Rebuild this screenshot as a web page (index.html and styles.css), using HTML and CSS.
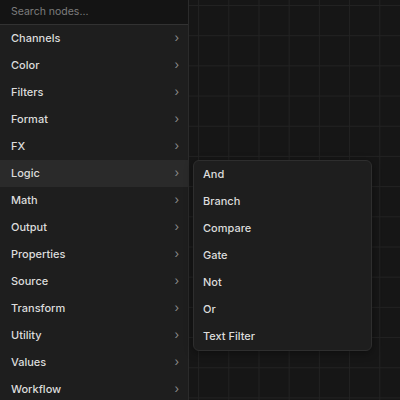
FILE: index.html
```html
<!DOCTYPE html>
<html>
<head>
    <meta charset="utf-8">
    <link rel="stylesheet" href="styles.css">
    <title>Node picker</title>
</head>
<body>

<div class="picker">
    <div class="menu">
        <div class="search">
            <input type="text" placeholder="Search nodes...">
        </div>
        <ul class="items">
            <li>Channels <span class="chev">&rsaquo;</span></li>
            <li>Color <span class="chev">&rsaquo;</span></li>
            <li>Filters <span class="chev">&rsaquo;</span></li>
            <li>Format <span class="chev">&rsaquo;</span></li>
            <li>FX <span class="chev">&rsaquo;</span></li>
            <li class="active">Logic <span class="chev">&rsaquo;</span></li>
            <li>Math <span class="chev">&rsaquo;</span></li>
            <li>Output <span class="chev">&rsaquo;</span></li>
            <li>Properties <span class="chev">&rsaquo;</span></li>
            <li>Source <span class="chev">&rsaquo;</span></li>
            <li>Transform <span class="chev">&rsaquo;</span></li>
            <li>Utility <span class="chev">&rsaquo;</span></li>
            <li>Values <span class="chev">&rsaquo;</span></li>
            <li>Workflow <span class="chev">&rsaquo;</span></li>
        </ul>
    </div>

    <ul class="submenu">
        <li>And</li>
        <li>Branch</li>
        <li>Compare</li>
        <li>Gate</li>
        <li>Not</li>
        <li>Or</li>
        <li>Text Filter</li>
    </ul>
</div>

</body>
</html>
```

FILE: styles.css
```css
html, body {margin: 0; padding: 0; height: 100%; overflow: hidden;}
body {
    background-color: #161616;
    background-image:
        linear-gradient(to right, #222 1px, transparent 1px),
        linear-gradient(to bottom, #222 1px, transparent 1px);
    background-size: 30.2px 30.2px;
    background-position: 17px 5px;
    font-family: Inter, "Noto Sans", sans-serif;
    font-size: 11px;
    font-weight: 500;
    color: #dcdcdc;
}

.picker {display: flex; align-items: flex-start;}

/* left column */
.menu {
    width: 188px;
    height: 400px;
    background: #1e1e1e;
    border-right: 1px solid #2b2b2b;
    flex-shrink: 0;
}
.search {
    height: 24px;
    background: #141414;
    border-bottom: 1px solid #323232;
    display: flex;
    align-items: center;
}
.search input {
    width: 100%;
    margin: 0;
    padding: 0 0 1px 11px;
    border: none;
    outline: none;
    background: transparent;
    font-family: inherit;
    font-size: 10.5px;
    font-weight: 400;
    color: #ddd;
    caret-color: #ccc;
}
.search input::placeholder {color: #7d7d7d;}

ul {list-style: none; margin: 0; padding: 0;}
.items li {
    height: 27px;
    padding: 0 9px 2px 11px;
    box-sizing: border-box;
    display: flex;
    align-items: center;
    justify-content: space-between;
}
.items li.active {background: #2a2a2a;}
.chev {color: #8a8a8a; font-size: 12px; font-weight: 400;}

/* popout */
.submenu {
    margin: 160px 0 0 4px;
    width: 177px;
    background: #1e1e1e;
    border: 1px solid #2e2e2e;
    border-radius: 6px;
    box-shadow: 0 2px 8px rgba(0, 0, 0, 0.4);
}
.submenu li {
    height: 27px;
    padding: 0 9px 2px;
    box-sizing: border-box;
    display: flex;
    align-items: center;
}
```
